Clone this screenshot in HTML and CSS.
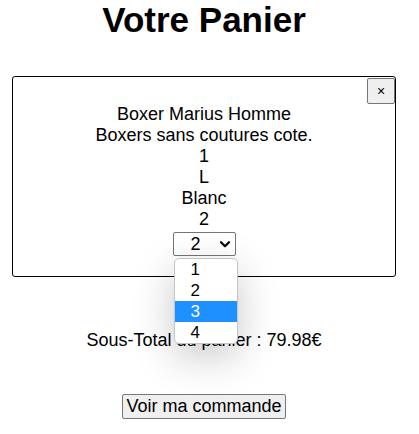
FILE: index.html
```html
<!DOCTYPE html>
<html lang="fr">
<head>
<meta charset="utf-8">
<title>Votre Panier</title>
<link rel="stylesheet" href="styles.css">
</head>
<body>
<div class="page">
  <h1 class="title">Votre Panier</h1>
  <div class="card">
    <button class="close" type="button">×</button>
    <div class="info">
      <div>Boxer Marius Homme</div>
      <div>Boxers sans coutures cote.</div>
      <div>1</div>
      <div>L</div>
      <div>Blanc</div>
      <div>2</div>
    </div>
    <div class="qty">
      <div class="select-wrap">
        <select class="select">
          <option>1</option>
          <option selected>2</option>
          <option>3</option>
          <option>4</option>
        </select>
        <svg class="chevron" width="10" height="7" viewBox="0 0 10 7" aria-hidden="true">
          <path d="M1 1.2 L5 5.2 L9 1.2" fill="none" stroke="#000" stroke-width="2.2" stroke-linecap="round" stroke-linejoin="round"/>
        </svg>
        <ul class="popup">
          <li>1</li>
          <li>2</li>
          <li class="active">3</li>
          <li>4</li>
        </ul>
      </div>
    </div>
  </div>
  <p class="subtotal">Sous-Total du panier : 79.98€</p>
  <div class="actions">
    <button class="order" type="button">Voir ma commande</button>
  </div>
</div>
</body>
</html>
```

FILE: styles.css
```css
html, body {
  margin: 0;
  padding: 0;
  background: #fff;
}
body {
  font-family: "Liberation Sans", Arial, sans-serif;
  color: #000;
}
.page {
  width: 384px;
  margin-left: 12px;
  text-align: center;
}
.title {
  margin: 0;
  font-size: 35px;
  font-weight: bold;
  line-height: 40px;
}
.card {
  position: relative;
  margin-top: 36px;
  border: 1px solid #000;
  border-radius: 3px;
  height: 199px;
  display: flex;
  flex-direction: column;
}
.close {
  align-self: flex-end;
  margin: 1px 0 0 0;
  width: 28px;
  height: 26px;
  padding: 0;
  font-family: "Liberation Sans", Arial, sans-serif;
  font-size: 14px;
  color: #000;
  background: #efefef;
  border: 1px solid #767676;
  border-radius: 2px;
}
.info {
  font-size: 18px;
  line-height: 21px;
}
.qty {
  margin-top: 2px;
}
.select-wrap {
  position: relative;
  display: inline-block;
  vertical-align: top;
}
.select {
  display: block;
  -webkit-appearance: none;
  appearance: none;
  width: 63px;
  height: 24px;
  font-family: "Liberation Sans", Arial, sans-serif;
  font-size: 18px;
  line-height: 22px;
  padding: 0 0 0 17px;
  border: 1px solid #767676;
  border-radius: 2px;
  background: #fff;
  color: #000;
}
.chevron {
  position: absolute;
  left: 47px;
  top: 9px;
  pointer-events: none;
}
.popup {
  position: absolute;
  left: 1px;
  top: 26px;
  width: 62px;
  margin: 0;
  padding: 0;
  list-style: none;
  text-align: left;
  background: #fff;
  border: 1px solid #c4c4c4;
  border-radius: 5px;
  box-shadow: 0 12px 40px rgba(0, 0, 0, 0.22);
  z-index: 2;
  overflow: hidden;
}
.popup li {
  font-size: 17px;
  line-height: 21px;
  height: 21px;
  padding-left: 16px;
}
.popup li.active {
  background: #1e90ff;
  color: #fff;
}
.subtotal {
  margin: 53px 0 0 0;
  font-size: 18px;
  line-height: 21px;
}
.actions {
  margin-top: 43px;
}
.order {
  font-family: "Liberation Sans", Arial, sans-serif;
  font-size: 18px;
  line-height: 21px;
  padding: 1px 3px;
  color: #000;
  background: #efefef;
  border: 1px solid #767676;
  border-radius: 2px;
}
```
